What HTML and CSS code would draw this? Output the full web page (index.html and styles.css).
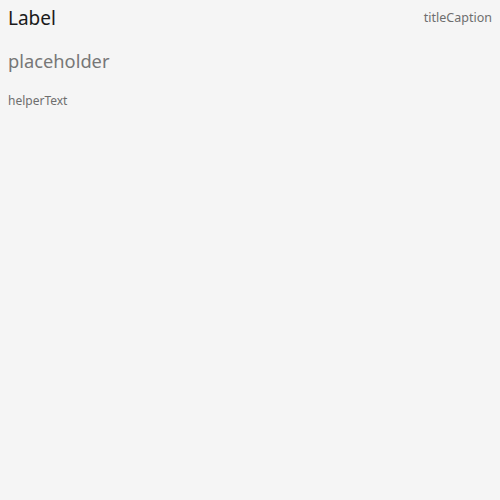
FILE: index.html
```html
<!DOCTYPE html>
<html>
<head>
<meta charset="utf-8">
<link rel="stylesheet" href="styles.css">
</head>
<body>
<div class="field">
  <div class="header">
    <span class="label">Label</span>
    <span class="caption">titleCaption</span>
  </div>
  <div class="input">placeholder</div>
  <div class="helper">helperText</div>
</div>
</body>
</html>
```
FILE: styles.css
```css
html, body {
  margin: 0;
  padding: 0;
  background: #f5f5f5;
  font-family: "Noto Sans", "DejaVu Sans", sans-serif;
}
.field {
  padding: 6px 8px;
  display: flex;
  flex-direction: column;
}
.header {
  display: flex;
  justify-content: space-between;
  align-items: flex-start;
}
.label {
  font-size: 19px;
  color: #1a1a1a;
  line-height: 24px;
}
.caption {
  margin-top: 4px;
  font-size: 12.5px;
  color: #6e6e6e;
  line-height: 16px;
}
.input {
  margin-top: 18px;
  font-size: 18.3px;
  color: #777777;
  line-height: 26px;
}
.helper {
  margin-top: 19px;
  font-size: 12px;
  color: #6e6e6e;
  line-height: 16px;
}
```
